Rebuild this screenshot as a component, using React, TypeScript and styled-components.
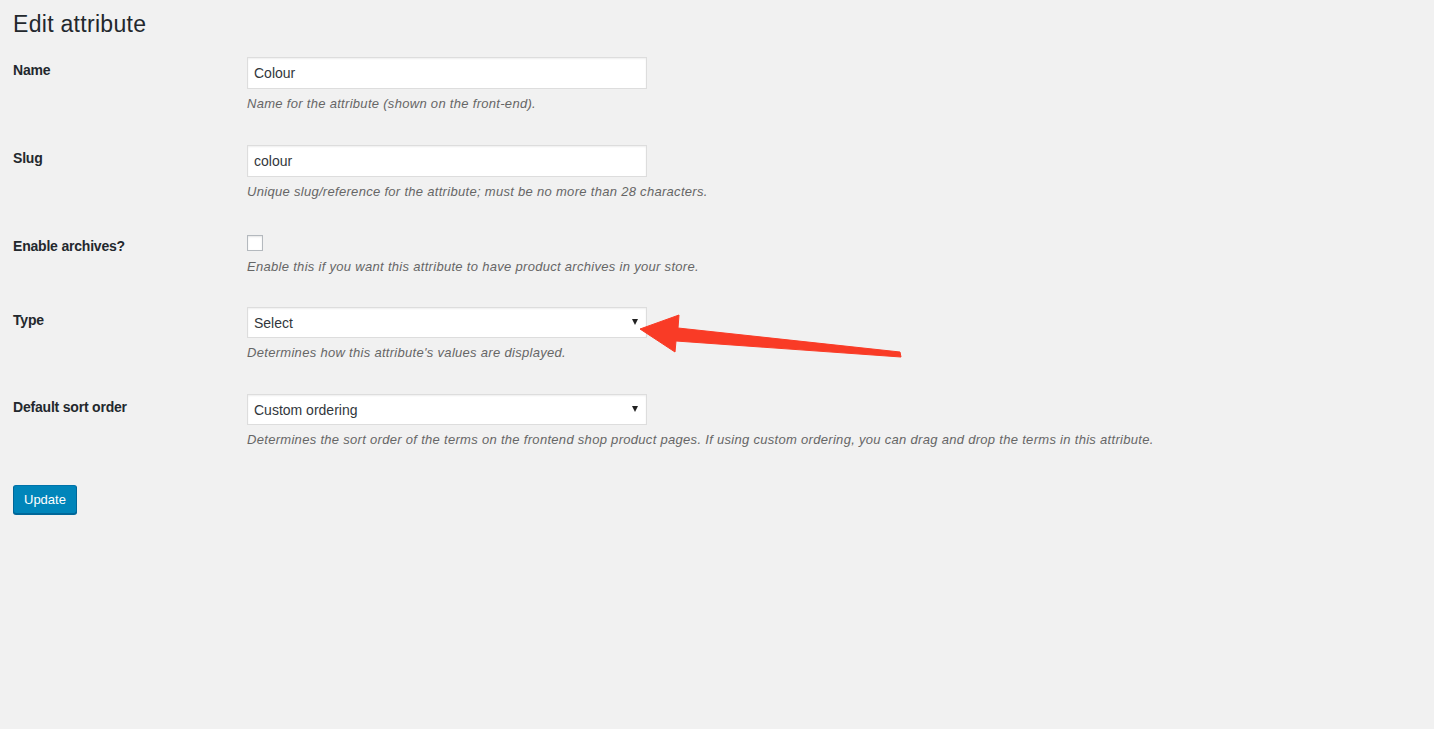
import styled, { createGlobalStyle } from 'styled-components';

const GlobalStyle = createGlobalStyle`
  html, body {
    margin: 0;
    padding: 0;
    background: #f1f1f1;
  }
  body {
    font-family: "Liberation Sans", Arial, sans-serif;
    color: #23282d;
  }
`;

const Page = styled.div`
  position: relative;
  width: 1434px;
  height: 729px;
  padding: 0 13px;
  box-sizing: border-box;
`;

const Title = styled.h1`
  margin: 0;
  padding: 9px 0 3px;
  font-size: 23px;
  font-weight: 400;
  letter-spacing: 0.3px;
  line-height: 30px;
  color: #23282d;
`;

const FormRow = styled.div<{ $compact?: boolean }>`
  display: grid;
  grid-template-columns: 234px 1fr;
  padding: 15px 0 ${(p) => (p.$compact ? '15px' : '16px')};
`;

const Label = styled.label`
  padding-top: 4px;
  font-size: 14px;
  font-weight: 700;
  letter-spacing: -0.2px;
  line-height: 18px;
  color: #23282d;
`;

const Field = styled.div`
  display: flex;
  flex-direction: column;
  align-items: flex-start;
`;

const TextInput = styled.input`
  width: 400px;
  height: 32px;
  box-sizing: border-box;
  margin: 0;
  padding: 0 6px;
  border: 1px solid #ddd;
  box-shadow: inset 0 1px 2px rgba(0, 0, 0, 0.07);
  background: #fff;
  font-family: inherit;
  font-size: 14px;
  color: #32373c;
  outline: none;
`;

const SelectBox = styled.div`
  width: 400px;
  height: 31px;
  box-sizing: border-box;
  display: flex;
  align-items: center;
  justify-content: space-between;
  padding: 0 8px 0 6px;
  border: 1px solid #ddd;
  box-shadow: inset 0 1px 2px rgba(0, 0, 0, 0.07);
  background: #fff;
  font-size: 14px;
  color: #32373c;
`;

const Caret = styled.span`
  width: 0;
  height: 0;
  margin-top: -2px;
  border-left: 3px solid transparent;
  border-right: 3px solid transparent;
  border-top: 6px solid #222;
`;

const Checkbox = styled.span`
  display: block;
  width: 16px;
  height: 16px;
  box-sizing: border-box;
  margin: 2px 0 1px;
  border: 1px solid #b4b9be;
  background: #fff;
  box-shadow: inset 0 1px 2px rgba(0, 0, 0, 0.1);
`;

const Description = styled.p`
  margin: 5px 0 0;
  font-size: 13px;
  font-style: italic;
  letter-spacing: 0.3px;
  line-height: 20px;
  color: #666;
`;

const SubmitRow = styled.div`
  padding-top: 19px;
`;

const PrimaryButton = styled.button`
  height: 29px;
  padding: 0 10px;
  border: 1px solid #0073aa;
  border-color: #0073aa #006799 #006799;
  border-radius: 3px;
  background: #0085ba;
  box-shadow: 0 1px 0 #006799;
  color: #fff;
  font-family: inherit;
  font-size: 13px;
  line-height: 26px;
  cursor: pointer;
`;

const Pointer = styled.svg`
  position: absolute;
  left: 0;
  top: 0;
  pointer-events: none;
`;

export default function App() {
  return (
    <Page>
      <GlobalStyle />
      <Title>Edit attribute</Title>

      <FormRow>
        <Label>Name</Label>
        <Field>
          <TextInput defaultValue="Colour" />
          <Description>Name for the attribute (shown on the front-end).</Description>
        </Field>
      </FormRow>

      <FormRow>
        <Label>Slug</Label>
        <Field>
          <TextInput defaultValue="colour" />
          <Description>
            Unique slug/reference for the attribute; must be no more than 28 characters.
          </Description>
        </Field>
      </FormRow>

      <FormRow $compact>
        <Label>Enable archives?</Label>
        <Field>
          <Checkbox />
          <Description>
            Enable this if you want this attribute to have product archives in your store.
          </Description>
        </Field>
      </FormRow>

      <FormRow>
        <Label>Type</Label>
        <Field>
          <SelectBox>
            <span>Select</span>
            <Caret />
          </SelectBox>
          <Description>Determines how this attribute's values are displayed.</Description>
        </Field>
      </FormRow>

      <FormRow>
        <Label>Default sort order</Label>
        <Field>
          <SelectBox>
            <span>Custom ordering</span>
            <Caret />
          </SelectBox>
          <Description>
            Determines the sort order of the terms on the frontend shop product pages. If using
            custom ordering, you can drag and drop the terms in this attribute.
          </Description>
        </Field>
      </FormRow>

      <SubmitRow>
        <PrimaryButton>Update</PrimaryButton>
      </SubmitRow>

      <Pointer width="1434" height="729" viewBox="0 0 1434 729">
        <polygon
          points="640,329 679,315 678,328 900,352 901,357 676,341 675,352"
          fill="#f93b26"
          stroke="#f93b26"
          strokeWidth="1"
          strokeLinejoin="round"
        />
      </Pointer>
    </Page>
  );
}
